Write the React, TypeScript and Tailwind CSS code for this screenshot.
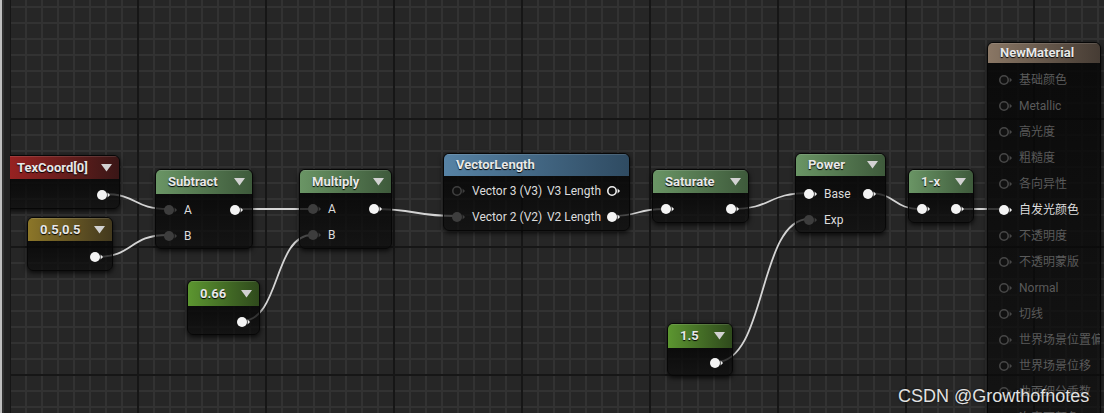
import React from "react";

type PinKind = "out" | "in" | "white" | "ring" | "ringWhite" | "ringDim";

const Pin: React.FC<{ kind: PinKind }> = ({ kind }) => {
  const fill =
    kind === "out" || kind === "white"
      ? "#f4f4f4"
      : kind === "in"
        ? "#3d3d3d"
        : "#111111";
  const stroke =
    kind === "ringWhite" ? "#f0f0f0" : kind === "ring" ? "#3f3f3f" : kind === "ringDim" ? "#474747" : "none";
  const arrow =
    kind === "out" || kind === "white" || kind === "ringWhite"
      ? "#f0f0f0"
      : kind === "ringDim"
        ? "#474747"
        : "#3d3d3d";
  return (
    <svg width="15" height="12" viewBox="0 0 15 12" className="shrink-0">
      <circle cx="6" cy="6" r={stroke === "none" ? 5 : 4.2} fill={fill} stroke={stroke} strokeWidth={stroke === "none" ? 0 : 1.6} />
      <polygon points="11.6,3.6 14,6 11.6,8.4" fill={arrow} />
    </svg>
  );
};

type Side = { kind: PinKind; label?: string };

const Row: React.FC<{ left?: Side; right?: Side; dim?: boolean; padL?: string }> = ({ left, right, dim, padL }) => (
  <div className="flex h-[26px] items-center whitespace-nowrap pr-[8px]">
    <div className={`flex min-w-0 flex-1 items-center ${padL ?? "pl-[7px]"}`}>
      {left && <Pin kind={left.kind} />}
      {left?.label && (
        <span className={`ml-[6px] ${dim ? "text-[#5a5a5a]" : "text-[#dcdcdc]"}`}>{left.label}</span>
      )}
    </div>
    {right && (
      <div className="flex items-center">
        {right.label && <span className="mr-[5px] text-[#dcdcdc]">{right.label}</span>}
        <Pin kind={right.kind} />
      </div>
    )}
  </div>
);

type NodeProps = {
  x: number;
  y: number;
  w: number;
  h: number;
  title: string;
  head: string;
  headH: string;
  arrow?: boolean;
  bodyPad?: string;
  children?: React.ReactNode;
};

// canvas starts 10px in from the page edge
const Node: React.FC<NodeProps> = ({ x, y, w, h, title, head, headH, arrow = true, bodyPad = "pt-[3px]", children }) => (
  <div
    className="absolute flex flex-col overflow-hidden rounded-[6px] border border-[#070707] bg-[#0a0a0a]/65 shadow-[0_2px_5px_rgba(0,0,0,0.75)]"
    style={{ left: x - 10, top: y, width: w, height: h }}
  >
    <div
      className={`relative flex shrink-0 items-center pl-[12px] ${headH} ${head} shadow-[inset_0_1px_0_rgba(255,255,255,0.12)]`}
    >
      <span className="text-[13px] font-bold text-[#e8e8e8] [text-shadow:0_1px_1px_#000]">{title}</span>
      {arrow && (
        <svg width="11" height="8" viewBox="0 0 11 8" className="absolute right-[7px]">
          <polygon points="0,0 11,0 5.5,7.5" fill="#d2d2d2" />
        </svg>
      )}
    </div>
    <div className={`flex flex-col bg-linear-to-b from-[#050505]/60 to-transparent text-[12px] ${bodyPad}`}>
      {children}
    </div>
  </div>
);

const wire = (x1: number, y1: number, x2: number, y2: number) => {
  const d = Math.max(28, Math.abs(x2 - x1) * 0.55);
  return `M${x1} ${y1} C${x1 + d} ${y1} ${x2 - d} ${y2} ${x2} ${y2}`;
};

const wires: [number, number, number, number][] = [
  [103, 194, 168, 209],
  [95, 257, 168, 235],
  [236, 209, 312, 209],
  [242, 321, 312, 235],
  [373, 209, 457, 216],
  [612, 216, 664, 209],
  [731, 209, 809, 193],
  [716, 362, 809, 219],
  [868, 193, 921, 209],
  [957, 209, 1003, 209],
];

const materialPins = [
  "基础颜色",
  "Metallic",
  "高光度",
  "粗糙度",
  "各向异性",
  "自发光颜色",
  "不透明度",
  "不透明蒙版",
  "Normal",
  "切线",
  "世界场景位置偏移",
  "世界场景位移",
  "曲面细分乘数",
  "次表面颜色",
];

const greenHead = "bg-linear-to-r from-[#6a9565] to-[#3e5a3b]";
const constHead = "bg-linear-to-r from-[#5c9630] to-[#2f4a1c]";

export default function App() {
  return (
    <div className="flex h-[413px] w-[1104px] overflow-hidden bg-[#262626] font-['Roboto','Noto_Sans_CJK_SC',sans-serif]">
      <div className="flex w-[10px] shrink-0">
        <div className="w-[2px] bg-[#bdbdbd]" />
        <div className="w-[2px] bg-[#2f2f2f]" />
        <div className="flex-1 bg-[#1f1f1f]" />
      </div>

      <div className="relative flex-1 overflow-hidden bg-[#262626] [background-image:linear-gradient(to_right,#161616_2px,transparent_2px),linear-gradient(to_bottom,#161616_2px,transparent_2px),linear-gradient(to_right,#323232_2px,transparent_2px),linear-gradient(to_bottom,#323232_2px,transparent_2px)] [background-size:128px_128px,128px_128px,16px_16px,16px_16px] [background-position:-1px_-10px,-1px_-10px,-1px_6px,-1px_6px]">
        <svg className="absolute left-0 top-0" width="1094" height="413">
          <g transform="translate(-10,0)" fill="none" stroke="#d4d4d4" strokeWidth="1.8">
            {wires.map(([a, b, c, d], i) => (
              <path key={i} d={wire(a, b, c, d)} />
            ))}
          </g>
        </svg>

        <Node x={4} y={155} w={116} h={54} title="TexCoord[0]" headH="h-[23px]" head="bg-linear-to-r from-[#9c2222] to-[#3a1616]">
          <Row right={{ kind: "out" }} />
        </Node>

        <Node x={27} y={217} w={86} h={54} title="0.5,0.5" headH="h-[23px]" head="bg-linear-to-r from-[#8c7628] to-[#43391d]">
          <Row right={{ kind: "out" }} />
        </Node>

        <Node x={155} y={169} w={98} h={80} title="Subtract" headH="h-[24px]" head={greenHead}>
          <Row left={{ kind: "in", label: "A" }} right={{ kind: "out" }} />
          <Row left={{ kind: "in", label: "B" }} />
        </Node>

        <Node x={299} y={169} w={93} h={80} title="Multiply" headH="h-[23px]" head={greenHead}>
          <Row left={{ kind: "in", label: "A" }} right={{ kind: "out" }} />
          <Row left={{ kind: "in", label: "B" }} />
        </Node>

        <Node x={187} y={280} w={73} h={55} title="0.66" headH="h-[25px]" head={constHead}>
          <Row right={{ kind: "out" }} />
        </Node>

        <Node x={443} y={153} w={187} h={78} title="VectorLength" headH="h-[22px]" head="bg-linear-to-r from-[#5783a5] to-[#2f4b62]" arrow={false} bodyPad="pt-[2px]">
          <Row left={{ kind: "ring", label: "Vector 3 (V3)" }} right={{ kind: "ringWhite", label: "V3 Length" }} />
          <Row left={{ kind: "in", label: "Vector 2 (V2)" }} right={{ kind: "out", label: "V2 Length" }} />
        </Node>

        <Node x={652} y={169} w={97} h={54} title="Saturate" headH="h-[23px]" head={greenHead}>
          <Row left={{ kind: "white" }} right={{ kind: "out" }} />
        </Node>

        <Node x={795} y={153} w={91} h={80} title="Power" headH="h-[22px]" head={greenHead} bodyPad="pt-[5px]">
          <Row left={{ kind: "white", label: "Base" }} right={{ kind: "out" }} />
          <Row left={{ kind: "in", label: "Exp" }} />
        </Node>

        <Node x={908} y={169} w={66} h={54} title="1-x" headH="h-[23px]" head={greenHead}>
          <Row left={{ kind: "white" }} right={{ kind: "out" }} />
        </Node>

        <Node x={667} y={323} w={66} h={53} title="1.5" headH="h-[24px]" head={constHead} bodyPad="pt-[2px]">
          <Row right={{ kind: "out" }} />
        </Node>

        <Node x={987} y={42} w={114} h={400} title="NewMaterial" headH="h-[20px]" head="bg-linear-to-r from-[#8a7765] to-[#463c34]" arrow={false} bodyPad="pt-[4px]">
          {materialPins.map((p) => (
            <Row
              key={p}
              padL="pl-[10px]"
              dim={p !== "自发光颜色"}
              left={{ kind: p === "自发光颜色" ? "white" : "ringDim", label: p }}
            />
          ))}
        </Node>

        <div className="absolute left-[888px] top-[387px] whitespace-nowrap font-['Liberation_Sans',sans-serif] text-[18px] leading-none text-[#e2e2e2] [text-shadow:0_0_2px_rgba(0,0,0,0.8)]">
          CSDN @Growthofnotes
        </div>
      </div>
    </div>
  );
}
